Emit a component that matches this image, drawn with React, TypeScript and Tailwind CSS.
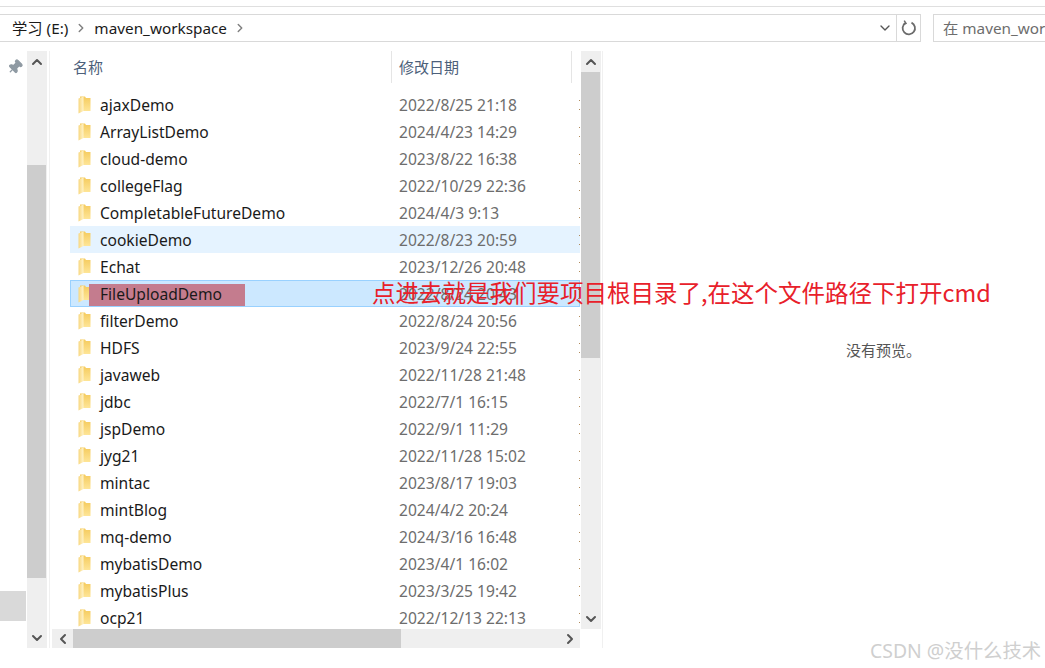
import { ChevronDown, ChevronLeft, ChevronRight, ChevronUp, Pin } from "lucide-react";

const ROWS: [string, string][] = [
  ["ajaxDemo", "2022/8/25 21:18"],
  ["ArrayListDemo", "2024/4/23 14:29"],
  ["cloud-demo", "2023/8/22 16:38"],
  ["collegeFlag", "2022/10/29 22:36"],
  ["CompletableFutureDemo", "2024/4/3 9:13"],
  ["cookieDemo", "2022/8/23 20:59"],
  ["Echat", "2023/12/26 20:48"],
  ["FileUploadDemo", "2022/8/24 20:43"],
  ["filterDemo", "2022/8/24 20:56"],
  ["HDFS", "2023/9/24 22:55"],
  ["javaweb", "2022/11/28 21:48"],
  ["jdbc", "2022/7/1 16:15"],
  ["jspDemo", "2022/9/1 11:29"],
  ["jyg21", "2022/11/28 15:02"],
  ["mintac", "2023/8/17 19:03"],
  ["mintBlog", "2024/4/2 20:24"],
  ["mq-demo", "2024/3/16 16:48"],
  ["mybatisDemo", "2023/4/1 16:02"],
  ["mybatisPlus", "2023/3/25 19:42"],
  ["ocp21", "2022/12/13 22:13"],
];

function Folder() {
  return (
    <svg width="13" height="18" viewBox="0 0 13 18" className="shrink-0">
      <defs>
        <linearGradient id="folder-body" x1="0" y1="0" x2="0" y2="1">
          <stop offset="0" stopColor="#f5cb5e" />
          <stop offset="1" stopColor="#fee597" />
        </linearGradient>
        <linearGradient id="folder-panel" x1="0" y1="0" x2="1" y2="0">
          <stop offset="0" stopColor="#f8d77f" />
          <stop offset="1" stopColor="#fff3c9" />
        </linearGradient>
      </defs>
      <path d="M2 0.5 H7 L8 2 H12.5 V15 H2 Z" fill="url(#folder-body)" />
      <path d="M0.5 2.5 L5.5 0.5 V15 L0.5 17.5 Z" fill="url(#folder-panel)" />
    </svg>
  );
}

function Refresh() {
  return (
    <svg width="18" height="18" viewBox="0 0 18 18" fill="none" stroke="#6b6b6b" strokeWidth="1.8" className="shrink-0">
      <path d="M11.5 3.6 A6.2 6.2 0 1 1 5.4 4" />
      <path d="M4.2 1.6 L6 4.4 L3 5.6" strokeWidth="1.5" />
    </svg>
  );
}

function Row({ name, date, state }: { name: string; date: string; state: "none" | "hover" | "selected" }) {
  const bg =
    state === "selected"
      ? "bg-[#cce8ff] border border-[#99d1ff] pl-[7px]"
      : state === "hover"
        ? "bg-[#e5f3ff] pl-2"
        : "pl-2";
  return (
    <div className={`relative flex h-[27px] items-center ${bg}`}>
      <Folder />
      <span className="relative z-10 ml-[9px] w-[299px] shrink-0 whitespace-nowrap pt-[2px] text-[#1a1a1a]">{name}</span>
      <span className="pt-[2px] text-[#6d6d6d]">{date}</span>
      <div className="ml-auto flex h-[10px] w-px flex-col justify-between">
        <i className="h-px w-px bg-[#b08a5a]" />
        <i className="h-px w-px bg-[#b08a5a]" />
      </div>
      {state === "selected" && <div className="absolute left-[18px] top-[3px] h-[22px] w-[156px] bg-[#c47c8e]" />}
    </div>
  );
}

export default function App() {
  return (
    <div className="h-[668px] w-[1045px] overflow-hidden bg-white text-[15px] font-['Noto_Sans','Noto_Sans_CJK_SC',sans-serif]">
      <div className="h-[7px] border-b border-[#dfdfdf]" />

      {/* address bar */}
      <div className="mt-[7px] flex h-[28px] items-stretch text-[15.3px]">
        <div className="flex w-[921px] items-center border-y border-r border-[#d9d9d9] pl-3 text-[#1a1a1a]">
          <span>学习 (E:)</span>
          <ChevronRight size={14} strokeWidth={2.5} className="mx-[6px] text-[#808080]" />
          <span>maven_workspace</span>
          <ChevronRight size={14} strokeWidth={2.5} className="ml-[6px] text-[#808080]" />
          <ChevronDown size={16} strokeWidth={2} className="ml-auto mr-[3px] text-[#555]" />
          <div className="flex h-full w-[24px] items-center justify-center border-l border-[#d9d9d9]">
            <Refresh />
          </div>
        </div>
        <div className="ml-3 flex flex-1 items-center overflow-hidden whitespace-nowrap border-y border-l border-[#d9d9d9] pl-[9px] text-[#6d6d6d]">
          在 maven_wor
        </div>
      </div>

      {/* body */}
      <div className="relative mt-[9px] flex h-[597px] text-[15.6px]">
        {/* nav pane */}
        <div className="flex w-[52px] shrink-0">
          <div className="flex w-[27px] shrink-0 flex-col">
            <Pin size={16} strokeWidth={2} className="ml-[7px] mt-[8px] rotate-45 fill-[#8f9aa3] text-[#8f9aa3]" />
            <div className="mt-[516px] h-[30px] w-[26px] bg-[#d9d9d9]" />
          </div>
          <div className="flex w-[20px] shrink-0 flex-col bg-[#efefef]">
            <div className="flex h-[21px] items-center justify-center">
              <ChevronUp size={16} strokeWidth={3} className="text-[#555]" />
            </div>
            <div className="mt-[93px] h-[413px] w-[19px] bg-[#cdcdcd]" />
            <div className="mt-auto flex h-[21px] items-center justify-center">
              <ChevronDown size={16} strokeWidth={3} className="text-[#555]" />
            </div>
          </div>
          <div className="ml-[2px] w-px bg-[#f0f0f0]" />
        </div>

        {/* file list */}
        <div className="flex w-[550px] shrink-0 flex-col">
          <div className="flex h-[578px]">
            <div className="w-[529px] shrink-0 overflow-hidden">
              <div className="flex h-[32px] items-center text-[15px] text-[#4c607a]">
                <span className="w-[339px] pl-[21px]">名称</span>
                <div className="flex h-full w-[181px] items-center border-x border-[#e5e5e5] pl-[7px]">修改日期</div>
              </div>
              <div className="ml-[18px] mt-2 flex w-[510px] flex-col">
                {ROWS.map(([name, date], i) => (
                  <Row key={name} name={name} date={date} state={i === 7 ? "selected" : i === 5 ? "hover" : "none"} />
                ))}
              </div>
            </div>
            <div className="flex w-[20px] shrink-0 flex-col bg-[#efefef]">
              <div className="flex h-[21px] items-center justify-center">
                <ChevronUp size={16} strokeWidth={3} className="text-[#555]" />
              </div>
              <div className="h-[286px] w-[19px] bg-[#cdcdcd]" />
              <div className="mt-auto flex h-[21px] items-center justify-center">
                <ChevronDown size={16} strokeWidth={3} className="text-[#555]" />
              </div>
            </div>
          </div>
          <div className="flex h-[19px] w-[528px] items-center bg-[#efefef]">
            <div className="flex w-[21px] justify-center">
              <ChevronLeft size={16} strokeWidth={3} className="text-[#555]" />
            </div>
            <div className="h-full w-[328px] bg-[#cdcdcd]" />
            <div className="ml-auto flex w-[21px] justify-center">
              <ChevronRight size={16} strokeWidth={3} className="text-[#555]" />
            </div>
          </div>
        </div>

        <div className="w-px bg-[#f0f0f0]" />

        {/* preview pane */}
        <div className="flex flex-1 items-center justify-center pt-[2px]">
          <span className="ml-[119px] text-[15px] text-[#555]">没有预览。</span>
        </div>

        {/* annotation drawn over the screenshot */}
        <div className="absolute left-[372px] top-[224px] whitespace-nowrap text-[23.5px] text-[#e8202a] font-['Noto_Sans_CJK_SC','Noto_Sans',sans-serif]">
          点进去就是我们要项目根目录了,在这个文件路径下打开cmd
        </div>
      </div>

      <div className="absolute left-[870px] top-[636px] whitespace-nowrap text-[19.4px] text-[#cfcfcf]">CSDN @没什么技术</div>
    </div>
  );
}
